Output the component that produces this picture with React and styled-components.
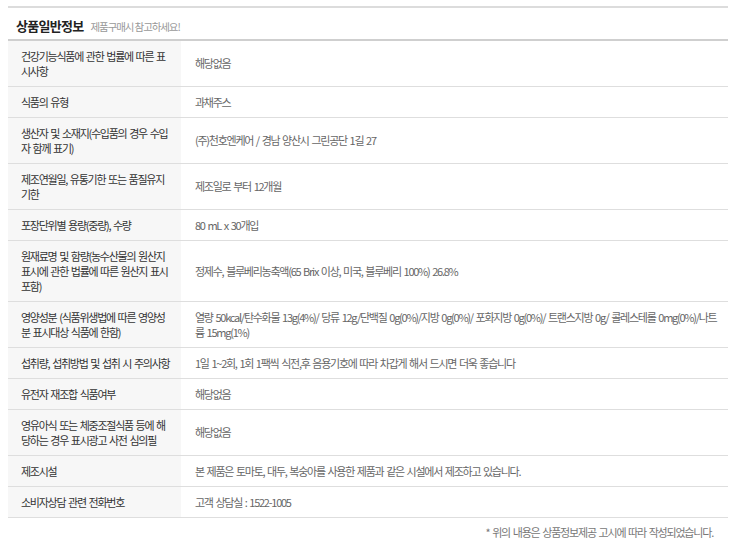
import React from 'react';
import styled, { createGlobalStyle } from 'styled-components';

const GlobalStyle = createGlobalStyle`
  body {
    margin: 0;
    background: #fff;
    font-family: 'Noto Sans CJK KR', 'Noto Sans', sans-serif;
  }
`;

const rows = [
  [['건강기능식품에 관한 법률에 따른 표', '시사항'], ['해당없음']],
  [['식품의 유형'], ['과채주스']],
  [['생산자 및 소재지(수입품의 경우 수입', '자 함께 표기)'], ['(주)천호엔케어 / 경남 양산시 그린공단 1길 27']],
  [['제조연월일, 유통기한 또는 품질유지', '기한'], ['제조일로 부터 12개월']],
  [['포장단위별 용량(중량), 수량'], ['80 mL x 30개입']],
  [['원재료명 및 함량(농수산물의 원산지', '표시에 관한 법률에 따른 원산지 표시', '포함)'], ['정제수, 블루베리농축액(65 Brix 이상, 미국, 블루베리 100%) 26.8%']],
  [['영양성분 (식품위생법에 따른 영양성', '분 표시대상 식품에 한함)'], ['열량 50kcal/탄수화물 13g(4%)/ 당류 12g/단백질 0g(0%)/지방 0g(0%)/ 포화지방 0g(0%)/ 트랜스지방 0g/ 콜레스테롤 0mg(0%)/나트', '륨 15mg(1%)']],
  [['섭취량, 섭취방법 및 섭취 시 주의사항'], ['1일 1~2회, 1회 1팩씩 식전,후 음용기호에 따라 차갑게 해서 드시면 더욱 좋습니다']],
  [['유전자 재조합 식품여부'], ['해당없음']],
  [['영유아식 또는 체중조절식품 등에 해', '당하는 경우 표시광고 사전 심의필'], ['해당없음']],
  [['제조시설'], ['본 제품은 토마토, 대두, 복숭아를 사용한 제품과 같은 시설에서 제조하고 있습니다.']],
  [['소비자상담 관련 전화번호'], ['고객 상담실 : 1522-1005']],
];

const Wrap = styled.div`
  width: 720px;
  padding: 6px 8px 0;
`;

const Header = styled.div`
  display: flex;
  align-items: baseline;
  gap: 7px;
  height: 33px;
  box-sizing: border-box;
  padding: 8px 8px 0;
  border-top: 2px solid #dcdcdc;
`;

const Title = styled.h3`
  margin: 0;
  font-size: 13px;
  font-weight: 700;
  color: #222;
  letter-spacing: -0.7px;
`;

const Sub = styled.span`
  font-size: 10.5px;
  color: #999;
  letter-spacing: -1.1px;
`;

const Table = styled.table`
  width: 100%;
  border-collapse: collapse;
  border-top: 2px solid #cfcfcf;
  table-layout: fixed;
`;

const Th = styled.th`
  width: 173px;
  box-sizing: border-box;
  padding: 7.5px 8px 7.5px 13px;
  background: #f7f7f7;
  font-weight: 400;
  text-align: left;
  font-size: 11px;
  line-height: 15px;
  color: #333;
  letter-spacing: -1.25px;
  word-spacing: 1.5px;
  white-space: nowrap;
  vertical-align: middle;
`;

const Td = styled.td`
  padding: 7.5px 10px 7.5px 14px;
  font-size: 11px;
  line-height: 15px;
  color: #666;
  letter-spacing: -1.25px;
  word-spacing: 1.5px;
  white-space: nowrap;
  vertical-align: middle;
`;

const Tr = styled.tr`
  border-bottom: 1px solid #dedede;
`;

const Note = styled.p`
  margin: 6px 15px 0 0;
  text-align: right;
  font-size: 11px;
  line-height: 16px;
  color: #777;
  letter-spacing: -1.2px;
  word-spacing: 1.5px;
`;

const Lines = ({ lines }) =>
  lines.map((line, i) => (
    <React.Fragment key={i}>
      {i > 0 && <br />}
      {line}
    </React.Fragment>
  ));

export default function App() {
  return (
    <Wrap>
      <GlobalStyle />
      <Header>
        <Title>상품일반정보</Title>
        <Sub>제품구매시 참고하세요!</Sub>
      </Header>
      <Table>
        <tbody>
          {rows.map(([label, value]) => (
            <Tr key={label.join('')}>
              <Th>
                <Lines lines={label} />
              </Th>
              <Td>
                <Lines lines={value} />
              </Td>
            </Tr>
          ))}
        </tbody>
      </Table>
      <Note>* 위의 내용은 상품정보제공 고시에 따라 작성되었습니다.</Note>
    </Wrap>
  );
}
